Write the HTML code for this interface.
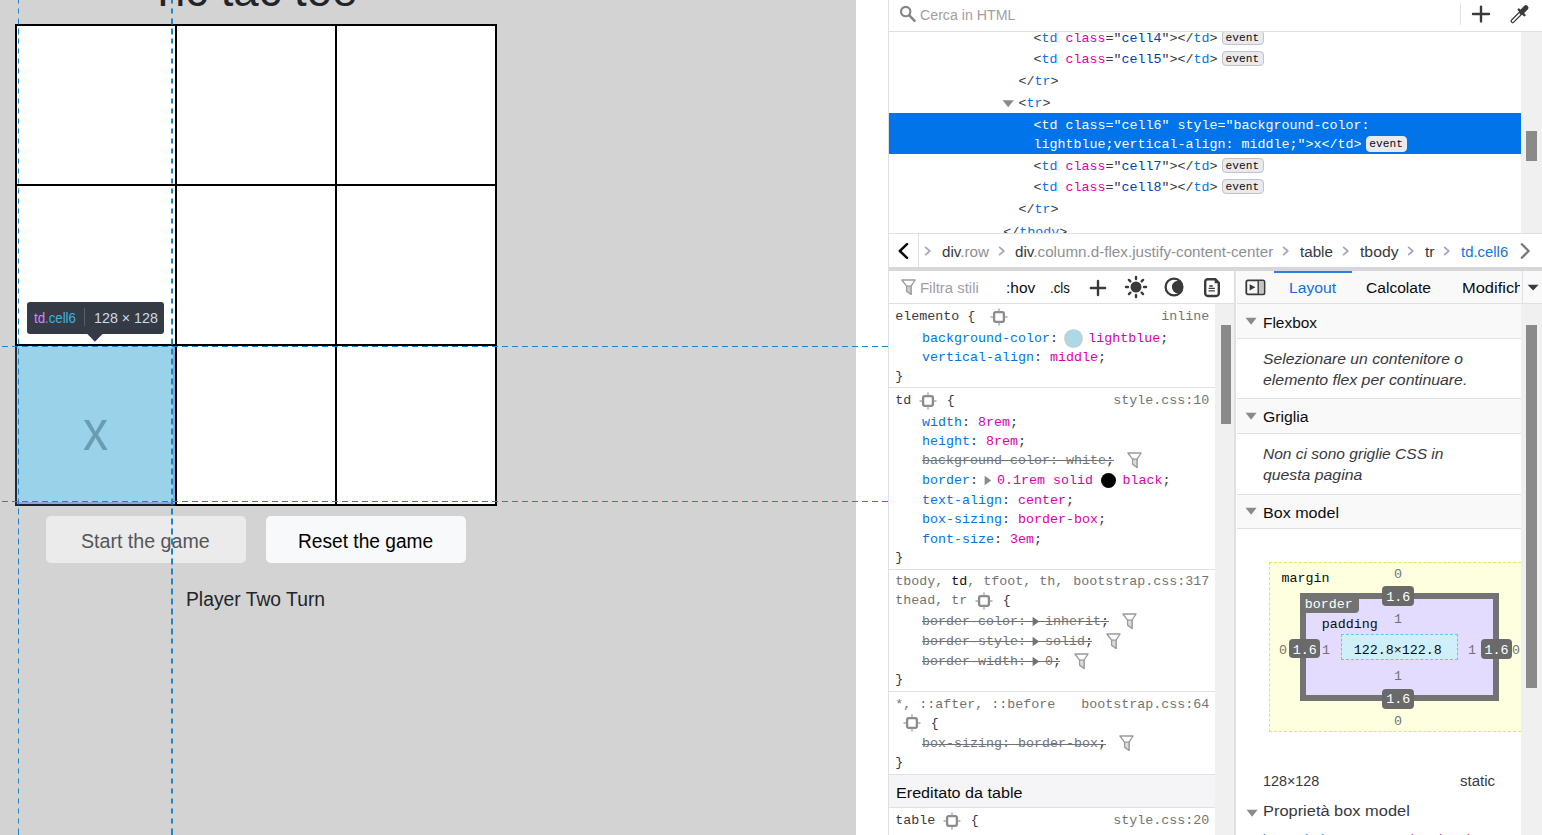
<!DOCTYPE html>
<html><head><meta charset="utf-8"><title>Tic tac toe</title><style>
html,body{margin:0;padding:0;background:#fff}
body{width:1542px;height:835px;position:relative;overflow:hidden;font-family:"Liberation Sans",sans-serif}
div,span,svg{position:absolute;display:block}
.s{white-space:pre;line-height:24px;transform-origin:0 0;font-family:"Liberation Sans",sans-serif}
.m{white-space:pre;line-height:20px;font-family:"Liberation Mono",monospace}
i{font-style:normal}
</style></head><body>
<div style="left:0px;top:0px;width:856px;height:835px;background:#d3d3d3;"></div>
<div style="left:0;top:0;width:856px;height:24px;overflow:hidden">
<span class="s" style="left:149.30px;top:-21.20px;font-size:45.7px;color:#212529;transform:scaleX(0.9970)">Tic tac toe</span>
</div>
<div style="left:15px;top:24px;width:482px;height:482px;background:#000;"></div>
<div style="left:17px;top:26px;width:158px;height:158px;background:#fff;"></div>
<div style="left:177px;top:26px;width:158px;height:158px;background:#fff;"></div>
<div style="left:337px;top:26px;width:158px;height:158px;background:#fff;"></div>
<div style="left:17px;top:186px;width:158px;height:158px;background:#fff;"></div>
<div style="left:177px;top:186px;width:158px;height:158px;background:#fff;"></div>
<div style="left:337px;top:186px;width:158px;height:158px;background:#fff;"></div>
<div style="left:17px;top:346px;width:158px;height:158px;background:#fff;"></div>
<div style="left:177px;top:346px;width:158px;height:158px;background:#fff;"></div>
<div style="left:337px;top:346px;width:158px;height:158px;background:#fff;"></div>
<div style="left:17px;top:346px;width:158px;height:158px;background:#99d2e9;"></div>
<div style="left:15px;top:346px;width:2px;height:160px;background:#1d2a36;"></div>
<div style="left:15px;top:504px;width:160px;height:2px;background:#1a2430;"></div>
<div style="left:173px;top:346px;width:2px;height:158px;background:#8fa6d9;"></div>
<div style="left:17px;top:502px;width:158px;height:2px;background:#8fa6d9;"></div>
<span class="s" style="left:82.90px;top:418.30px;font-size:57.5px;color:#6b9db2;transform:scaleX(0.8765)">x</span>
<div style="left:46px;top:516px;width:200px;height:47px;background:#ebebeb;border-radius:5px;"></div>
<div style="left:266px;top:516px;width:200px;height:47px;background:#f8f9fa;border-radius:5px;"></div>
<span class="s" style="left:81.10px;top:529.30px;font-size:19.4px;color:#555657;transform:scaleX(1.0114)">Start the game</span>
<span class="s" style="left:298.10px;top:529.30px;font-size:19.4px;color:#000;transform:scaleX(0.9871)">Reset the game</span>
<span class="s" style="left:186.20px;top:587.30px;font-size:19.4px;color:#212529;transform:scaleX(0.9949)">Player Two Turn</span>
<div style="left:18px;top:0;width:1px;height:835px;background:repeating-linear-gradient(to bottom,#1c86c9 0 5.5px,transparent 5.5px 10px);background-position:0 -1.5px"></div>
<div style="left:171px;top:0;width:2px;height:835px;background:repeating-linear-gradient(to bottom,#1c86c9 0 5.5px,transparent 5.5px 10px);background-position:0 -1.5px"></div>
<div style="left:0;top:346px;width:888px;height:1px;background:repeating-linear-gradient(to right,#1c86c9 0 6px,transparent 6px 10px);background-position:2px 0"></div>
<div style="left:0;top:501px;width:888px;height:1px;background:repeating-linear-gradient(to right,#1c86c9 0 6px,transparent 6px 10px);background-position:2px 0"></div>
<div style="left:27px;top:302px;width:137px;height:32px;background:#353b45;border-radius:3px;"></div>
<svg style="left:86px;top:333px;" width="18" height="10" viewBox="0 0 18 10"><path d="M0.4 0H17.5L8.9 8.7z" fill="#353b45"/></svg>
<span class="s" style="left:33.60px;top:306.30px;font-size:14.2px;transform:scaleX(0.9314)"><i style="color:#df80ff">td</i><i style="color:#42b1e4">.cell6</i></span>
<div style="left:84px;top:308px;width:1px;height:18px;background:#5a606b;"></div>
<span class="s" style="left:93.80px;top:306.30px;font-size:14.2px;color:#cdd9e4;transform:scaleX(1.0067)">128 × 128</span>
<div style="left:856px;top:0px;width:686px;height:835px;background:#fff;"></div>
<div style="left:856px;top:346px;width:32px;height:1px;background:repeating-linear-gradient(to right,#1c86c9 0 6px,transparent 6px 10px);background-position:-4px 0"></div>
<div style="left:856px;top:501px;width:32px;height:1px;background:repeating-linear-gradient(to right,#1c86c9 0 6px,transparent 6px 10px);background-position:-4px 0"></div>
<div style="left:888px;top:0px;width:1px;height:835px;background:#e0e0e2;"></div>
<div style="left:889px;top:0px;width:653px;height:31px;background:#fff;"></div>
<div style="left:889px;top:31px;width:653px;height:1px;background:#e0e0e2;"></div>
<svg style="left:899px;top:5px;" width="18" height="18" viewBox="0 0 18 18"><circle cx="6.7" cy="6.6" r="4.7" fill="none" stroke="#858588" stroke-width="2.1"/><path d="M10.3 10.3L15.6 15.8" stroke="#858588" stroke-width="2.5" stroke-linecap="round"/></svg>
<span class="s" style="left:920.40px;top:2.80px;font-size:15.5px;color:#a0a0a3;transform:scaleX(0.9154)">Cerca in HTML</span>
<div style="left:1460px;top:2.5px;width:1px;height:22.5px;background:#e0e0e2;"></div>
<svg style="left:1471px;top:4.4px;" width="20" height="20" viewBox="0 0 20 20"><path d="M10 2.6V17.4M2 10H18" stroke="#3a3a3d" stroke-width="2.4" stroke-linecap="round"/></svg>
<svg style="left:1509px;top:3px;" width="22" height="22" viewBox="0 0 22 22"><path d="M3.7 18.1L12 9.8" stroke="#3a3a3d" stroke-width="4.3" stroke-linecap="round"/><path d="M3.7 18.1L12.6 9.2" stroke="#fff" stroke-width="1.7" stroke-linecap="round"/><path d="M12.7 9.1L16.9 4.7" stroke="#3a3a3d" stroke-width="5" stroke-linecap="round"/><path d="M9.8 6.6L15.4 12.2" stroke="#3a3a3d" stroke-width="2.4" stroke-linecap="round"/></svg>
<div style="left:889px;top:32px;width:653px;height:201px;overflow:hidden">
<div style="left:-889px;top:-32px;width:1542px;height:835px">
<div style="left:889px;top:113px;width:632px;height:41px;background:#0074e8;"></div>
<div style="left:1521px;top:32px;width:21px;height:201px;background:#f0f0f0;"></div>
<div style="left:1526px;top:130.5px;width:11px;height:30px;background:#8a8a8a;"></div>
<span class="m" style="left:1033.50px;top:28.80px;font-size:13.33px;"><i style="color:#38383d">&lt;</i><i style="color:#0074e8">td</i> <i style="color:#dd00a9">class</i><i style="color:#38383d">="</i><i style="color:#003eaa">cell4</i><i style="color:#38383d">"&gt;&lt;/</i><i style="color:#0074e8">td</i><i style="color:#38383d">&gt;</i></span>
<div style="left:1222.2px;top:29.6px;width:41.6px;height:15.8px;background:#e9e9ee;border:1px solid #c2c2c7;border-radius:4px;box-sizing:border-box"></div>
<span class="m" style="left:1225.60px;top:27.80px;font-size:11.2px;"><i style="color:#0c0c0d">event</i></span>
<span class="m" style="left:1033.50px;top:49.80px;font-size:13.33px;"><i style="color:#38383d">&lt;</i><i style="color:#0074e8">td</i> <i style="color:#dd00a9">class</i><i style="color:#38383d">="</i><i style="color:#003eaa">cell5</i><i style="color:#38383d">"&gt;&lt;/</i><i style="color:#0074e8">td</i><i style="color:#38383d">&gt;</i></span>
<div style="left:1222.2px;top:50.6px;width:41.6px;height:15.8px;background:#e9e9ee;border:1px solid #c2c2c7;border-radius:4px;box-sizing:border-box"></div>
<span class="m" style="left:1225.60px;top:48.80px;font-size:11.2px;"><i style="color:#0c0c0d">event</i></span>
<span class="m" style="left:1018.40px;top:71.80px;font-size:13.33px;"><i style="color:#38383d">&lt;/</i><i style="color:#0074e8">tr</i><i style="color:#38383d">&gt;</i></span>
<svg style="left:1002px;top:98.6px;" width="13" height="10" viewBox="0 0 13 10"><path d="M0.6 1.2H11.8L6.2 8.2z" fill="#8a8a8a"/></svg>
<span class="m" style="left:1018.40px;top:93.80px;font-size:13.33px;"><i style="color:#38383d">&lt;</i><i style="color:#0074e8">tr</i><i style="color:#38383d">&gt;</i></span>
<span class="m" style="left:1033.50px;top:115.80px;font-size:13.33px;"><i style="color:#fff">&lt;td class="cell6" style="background-color:</i></span>
<span class="m" style="left:1033.50px;top:134.80px;font-size:13.33px;"><i style="color:#fff">lightblue;vertical-align: middle;"&gt;x&lt;/td&gt;</i></span>
<div style="left:1365.9px;top:135.79999999999998px;width:41.6px;height:15.8px;background:#e9e9ee;border:1px solid #e9e9ee;border-radius:4px;box-sizing:border-box"></div>
<span class="m" style="left:1369.30px;top:134.00px;font-size:11.2px;"><i style="color:#0c0c0d">event</i></span>
<span class="m" style="left:1033.50px;top:156.80px;font-size:13.33px;"><i style="color:#38383d">&lt;</i><i style="color:#0074e8">td</i> <i style="color:#dd00a9">class</i><i style="color:#38383d">="</i><i style="color:#003eaa">cell7</i><i style="color:#38383d">"&gt;&lt;/</i><i style="color:#0074e8">td</i><i style="color:#38383d">&gt;</i></span>
<div style="left:1222.2px;top:157.6px;width:41.6px;height:15.8px;background:#e9e9ee;border:1px solid #c2c2c7;border-radius:4px;box-sizing:border-box"></div>
<span class="m" style="left:1225.60px;top:155.80px;font-size:11.2px;"><i style="color:#0c0c0d">event</i></span>
<span class="m" style="left:1033.50px;top:177.80px;font-size:13.33px;"><i style="color:#38383d">&lt;</i><i style="color:#0074e8">td</i> <i style="color:#dd00a9">class</i><i style="color:#38383d">="</i><i style="color:#003eaa">cell8</i><i style="color:#38383d">"&gt;&lt;/</i><i style="color:#0074e8">td</i><i style="color:#38383d">&gt;</i></span>
<div style="left:1222.2px;top:178.6px;width:41.6px;height:15.8px;background:#e9e9ee;border:1px solid #c2c2c7;border-radius:4px;box-sizing:border-box"></div>
<span class="m" style="left:1225.60px;top:176.80px;font-size:11.2px;"><i style="color:#0c0c0d">event</i></span>
<span class="m" style="left:1018.40px;top:199.80px;font-size:13.33px;"><i style="color:#38383d">&lt;/</i><i style="color:#0074e8">tr</i><i style="color:#38383d">&gt;</i></span>
<span class="m" style="left:1003.30px;top:222.80px;font-size:13.33px;"><i style="color:#38383d">&lt;/</i><i style="color:#0074e8">tbody</i><i style="color:#38383d">&gt;</i></span>
</div></div>
<div style="left:889px;top:233px;width:653px;height:1px;background:#e0e0e2;"></div>
<div style="left:889px;top:234px;width:653px;height:33px;background:#fff;"></div>
<div style="left:918px;top:234px;width:1px;height:33px;background:#e0e0e2;"></div>
<svg style="left:896px;top:241px;" width="14" height="20" viewBox="0 0 14 20"><path d="M11 3.2L3.8 10L11 16.8" fill="none" stroke="#0c0c0d" stroke-width="2.5" stroke-linecap="round" stroke-linejoin="round"/></svg>
<svg style="left:1517.5px;top:241px;" width="14" height="20" viewBox="0 0 14 20"><path d="M3.8 3.2L10.6 10L3.8 16.8" fill="none" stroke="#77777a" stroke-width="2.3" stroke-linecap="round" stroke-linejoin="round"/></svg>
<svg style="left:923.8px;top:245.8px;" width="8" height="10" viewBox="0 0 8 10"><path d="M1.6 1.4L5.8 5L1.6 8.6" fill="none" stroke="#a4a4c0" stroke-width="1.7" stroke-linecap="round" stroke-linejoin="round"/></svg>
<span class="s" style="left:941.50px;top:239.80px;font-size:15.5px;transform:scaleX(0.9773)"><i style="color:#38383d">div</i><i style="color:#8f8f93">.row</i></span>
<svg style="left:998.2px;top:245.8px;" width="8" height="10" viewBox="0 0 8 10"><path d="M1.6 1.4L5.8 5L1.6 8.6" fill="none" stroke="#a4a4c0" stroke-width="1.7" stroke-linecap="round" stroke-linejoin="round"/></svg>
<span class="s" style="left:1015.40px;top:239.80px;font-size:15.5px;transform:scaleX(0.9806)"><i style="color:#38383d">div</i><i style="color:#8f8f93">.column.d-flex.justify-content-center</i></span>
<svg style="left:1282.3px;top:245.8px;" width="8" height="10" viewBox="0 0 8 10"><path d="M1.6 1.4L5.8 5L1.6 8.6" fill="none" stroke="#a4a4c0" stroke-width="1.7" stroke-linecap="round" stroke-linejoin="round"/></svg>
<span class="s" style="left:1300.40px;top:239.80px;font-size:15.5px;color:#38383d;transform:scaleX(0.9791)">table</span>
<svg style="left:1342.4px;top:245.8px;" width="8" height="10" viewBox="0 0 8 10"><path d="M1.6 1.4L5.8 5L1.6 8.6" fill="none" stroke="#a4a4c0" stroke-width="1.7" stroke-linecap="round" stroke-linejoin="round"/></svg>
<span class="s" style="left:1360.30px;top:239.80px;font-size:15.5px;color:#38383d;transform:scaleX(1.0155)">tbody</span>
<svg style="left:1407.2px;top:245.8px;" width="8" height="10" viewBox="0 0 8 10"><path d="M1.6 1.4L5.8 5L1.6 8.6" fill="none" stroke="#a4a4c0" stroke-width="1.7" stroke-linecap="round" stroke-linejoin="round"/></svg>
<span class="s" style="left:1425.20px;top:239.80px;font-size:15.5px;color:#38383d;transform:scaleX(1.0137)">tr</span>
<svg style="left:1443.4px;top:245.8px;" width="8" height="10" viewBox="0 0 8 10"><path d="M1.6 1.4L5.8 5L1.6 8.6" fill="none" stroke="#a4a4c0" stroke-width="1.7" stroke-linecap="round" stroke-linejoin="round"/></svg>
<span class="s" style="left:1461.40px;top:239.80px;font-size:15.5px;color:#1276dc;transform:scaleX(0.9612)">td.cell6</span>
<div style="left:889px;top:267px;width:653px;height:3.6px;background:#d7d7db;"></div>
<div style="left:889px;top:270.6px;width:345px;height:32.4px;background:#fff;"></div>
<div style="left:889px;top:303px;width:345px;height:1px;background:#e0e0e2;"></div>
<svg style="left:900.6px;top:279px;" width="15" height="17" viewBox="0 0 15 17"><path d="M0.9 1H14.1L10 7.2V15.4L5.6 12V7.2z" fill="#fff" stroke="#9a9a9e" stroke-width="1.3" stroke-linejoin="round"/><path d="M5.6 7.2H10V15.4L5.6 12z" fill="#cdcdd0" stroke="#9a9a9e" stroke-width="1.2" stroke-linejoin="round"/></svg>
<span class="s" style="left:920.40px;top:275.80px;font-size:15.5px;color:#a0a0a3;transform:scaleX(0.9619)">Filtra stili</span>
<span class="s" style="left:1006.40px;top:275.80px;font-size:15.5px;color:#0c0c0d;transform:scaleX(0.9968)">:hov</span>
<span class="s" style="left:1050.00px;top:275.80px;font-size:15.5px;color:#0c0c0d;transform:scaleX(0.8516)">.cls</span>
<svg style="left:1087.7px;top:277.6px;" width="20" height="20" viewBox="0 0 20 20"><path d="M10 2.9V17.1M2.9 10H17.1" stroke="#3a3a3d" stroke-width="2.4" stroke-linecap="round"/></svg>
<svg style="left:1124px;top:274.9px;" width="24" height="24" viewBox="0 0 24 24"><circle cx="12" cy="12" r="5.5" fill="#3a3a3d"/><g stroke="#3a3a3d" stroke-width="2.4" stroke-linecap="round"><path d="M20.00 12.00L22.00 12.00"/><path d="M17.66 17.66L19.07 19.07"/><path d="M12.00 20.00L12.00 22.00"/><path d="M6.34 17.66L4.93 19.07"/><path d="M4.00 12.00L2.00 12.00"/><path d="M6.34 6.34L4.93 4.93"/><path d="M12.00 4.00L12.00 2.00"/><path d="M17.66 6.34L19.07 4.93"/></g></svg>
<svg style="left:1163.1px;top:275.9px;" width="22" height="22" viewBox="0 0 22 22"><defs><clipPath id="mc"><circle cx="11" cy="11" r="9"/></clipPath></defs><circle cx="11" cy="11" r="8.4" fill="none" stroke="#3a3a3d" stroke-width="2.3"/><circle cx="15.2" cy="11" r="6.3" fill="#3a3a3d" clip-path="url(#mc)"/></svg>
<svg style="left:1203px;top:276.5px;" width="18" height="21" viewBox="0 0 18 21"><path d="M4.8 2.2H12.2L15.8 5.8V16.4a2.6 2.6 0 0 1-2.6 2.6H4.8a2.6 2.6 0 0 1-2.6-2.6V4.8a2.6 2.6 0 0 1 2.6-2.6z" fill="none" stroke="#3a3a3d" stroke-width="2.4" stroke-linejoin="round"/><path d="M11.6 2.4V6.2H15.6z" fill="#3a3a3d"/><path d="M6.2 9H9.8M5.6 11.4H11.9M5.6 13.8H11.9" stroke="#3a3a3d" stroke-width="1.3"/></svg>
<div style="left:889px;top:304px;width:345px;height:531px;overflow:hidden;background:#fff">
<div style="left:-889px;top:-304px;width:1542px;height:835px">
<div style="left:1215px;top:304px;width:19px;height:531px;background:#f0f0f0;"></div>
<div style="left:1220.7px;top:325.2px;width:10px;height:98.4px;background:#8a8a8a;"></div>
<span class="m" style="left:895.20px;top:306.80px;font-size:13.33px;"><i style="color:#38383d">elemento {</i></span>
<svg style="left:989.5px;top:307.8px;" width="18" height="18" viewBox="0 0 18 18"><rect x="4.1" y="4.1" width="9.8" height="9.8" rx="1.8" fill="none" stroke="#8b8b8e" stroke-width="2.3"/><path d="M9 0.5V3.4M9 14.6V17.5M0.5 9H3.4M14.6 9H17.5" stroke="#a6a6a9" stroke-width="1.4"/></svg>
<span class="m" style="left:1161.20px;top:306.80px;font-size:13.33px;"><i style="color:#737373">inline</i></span>
<span class="m" style="left:922.00px;top:328.80px;font-size:13.33px;"><i style="color:#0074e8">background-color</i><i style="color:#38383d">: </i></span>
<div style="left:1065px;top:330.2px;width:16.6px;height:16.6px;border-radius:50%;background:#add8e6;box-shadow:0 0 0 0.8px #c9c9cc"></div>
<span class="m" style="left:1088.20px;top:328.80px;font-size:13.33px;"><i style="color:#dd00a9">lightblue</i><i style="color:#38383d">;</i></span>
<span class="m" style="left:922.00px;top:347.80px;font-size:13.33px;"><i style="color:#0074e8">vertical-align</i><i style="color:#38383d">: </i><i style="color:#dd00a9">middle</i><i style="color:#38383d">;</i></span>
<span class="m" style="left:895.20px;top:366.80px;font-size:13.33px;"><i style="color:#38383d">}</i></span>
<div style="left:889px;top:387.4px;width:326px;height:1px;background:#e0e0e2;"></div>
<span class="m" style="left:895.20px;top:390.80px;font-size:13.33px;"><i style="color:#38383d">td</i></span>
<svg style="left:919.3px;top:391.8px;" width="18" height="18" viewBox="0 0 18 18"><rect x="4.1" y="4.1" width="9.8" height="9.8" rx="1.8" fill="none" stroke="#8b8b8e" stroke-width="2.3"/><path d="M9 0.5V3.4M9 14.6V17.5M0.5 9H3.4M14.6 9H17.5" stroke="#a6a6a9" stroke-width="1.4"/></svg>
<span class="m" style="left:946.70px;top:390.80px;font-size:13.33px;"><i style="color:#38383d">{</i></span>
<span class="m" style="left:1113.20px;top:390.80px;font-size:13.33px;"><i style="color:#737373">style.css:10</i></span>
<span class="m" style="left:922.00px;top:412.80px;font-size:13.33px;"><i style="color:#0074e8">width</i><i style="color:#38383d">: </i><i style="color:#dd00a9">8rem</i><i style="color:#38383d">;</i></span>
<span class="m" style="left:922.00px;top:432.30px;font-size:13.33px;"><i style="color:#0074e8">height</i><i style="color:#38383d">: </i><i style="color:#dd00a9">8rem</i><i style="color:#38383d">;</i></span>
<span class="m" style="left:922.00px;top:450.80px;font-size:13.33px;"><i style="color:#737373">background-color: white</i><i style="color:#38383d">;</i></span>
<div style="left:922.0px;top:460.20000000000005px;width:191.79999999999995px;height:1.3px;background:#737373;"></div>
<svg style="left:1127.1999999999998px;top:451.59999999999997px;" width="15" height="17" viewBox="0 0 15 17"><path d="M0.9 1H14.1L10 7.2V15.4L5.6 12V7.2z" fill="#fff" stroke="#9a9a9e" stroke-width="1.3" stroke-linejoin="round"/><path d="M5.6 7.2H10V15.4L5.6 12z" fill="#dcdcde" stroke="#9a9a9e" stroke-width="1.2" stroke-linejoin="round"/></svg>
<span class="m" style="left:922.00px;top:471.30px;font-size:13.33px;"><i style="color:#0074e8">border</i><i style="color:#38383d">: </i></span>
<svg style="left:984.4px;top:475.3px;" width="8" height="11" viewBox="0 0 8 11"><path d="M0.6 0.8L7.2 5.5L0.6 10.2z" fill="#8a8a8a"/></svg>
<span class="m" style="left:997.00px;top:471.30px;font-size:13.33px;"><i style="color:#dd00a9">0.1rem solid</i></span>
<div style="left:1100.9px;top:473px;width:15.2px;height:15.2px;border-radius:50%;background:#000"></div>
<span class="m" style="left:1122.60px;top:471.30px;font-size:13.33px;"><i style="color:#dd00a9">black</i><i style="color:#38383d">;</i></span>
<span class="m" style="left:922.00px;top:490.80px;font-size:13.33px;"><i style="color:#0074e8">text-align</i><i style="color:#38383d">: </i><i style="color:#dd00a9">center</i><i style="color:#38383d">;</i></span>
<span class="m" style="left:922.00px;top:510.20px;font-size:13.33px;"><i style="color:#0074e8">box-sizing</i><i style="color:#38383d">: </i><i style="color:#dd00a9">border-box</i><i style="color:#38383d">;</i></span>
<span class="m" style="left:922.00px;top:529.80px;font-size:13.33px;"><i style="color:#0074e8">font-size</i><i style="color:#38383d">: </i><i style="color:#dd00a9">3em</i><i style="color:#38383d">;</i></span>
<span class="m" style="left:895.20px;top:548.40px;font-size:13.33px;"><i style="color:#38383d">}</i></span>
<div style="left:889px;top:568.5px;width:326px;height:1px;background:#e0e0e2;"></div>
<span class="m" style="left:895.20px;top:572.20px;font-size:13.33px;"><i style="color:#737373">tbody, </i><i style="color:#0c0c0d">td</i><i style="color:#737373">, tfoot, th,</i></span>
<span class="m" style="left:1073.20px;top:572.20px;font-size:13.33px;"><i style="color:#737373">bootstrap.css:317</i></span>
<span class="m" style="left:895.20px;top:591.00px;font-size:13.33px;"><i style="color:#737373">thead, tr</i></span>
<svg style="left:975.2px;top:591.6px;" width="18" height="18" viewBox="0 0 18 18"><rect x="4.1" y="4.1" width="9.8" height="9.8" rx="1.8" fill="none" stroke="#8b8b8e" stroke-width="2.3"/><path d="M9 0.5V3.4M9 14.6V17.5M0.5 9H3.4M14.6 9H17.5" stroke="#a6a6a9" stroke-width="1.4"/></svg>
<span class="m" style="left:1002.70px;top:591.00px;font-size:13.33px;"><i style="color:#38383d">{</i></span>
<span class="m" style="left:922.00px;top:612.00px;font-size:13.33px;"><i style="color:#737373">border-color:</i></span>
<svg style="left:1031.8px;top:616.0px;" width="8" height="11" viewBox="0 0 8 11"><path d="M0.6 0.8L7.2 5.5L0.6 10.2z" fill="#737373"/></svg>
<span class="m" style="left:1045.00px;top:612.00px;font-size:13.33px;"><i style="color:#737373">inherit</i><i style="color:#38383d">;</i></span>
<div style="left:922.0px;top:621.2px;width:186.5999999999999px;height:1.3px;background:#737373;"></div>
<svg style="left:1122.1999999999998px;top:612.6000000000001px;" width="15" height="17" viewBox="0 0 15 17"><path d="M0.9 1H14.1L10 7.2V15.4L5.6 12V7.2z" fill="#fff" stroke="#9a9a9e" stroke-width="1.3" stroke-linejoin="round"/><path d="M5.6 7.2H10V15.4L5.6 12z" fill="#dcdcde" stroke="#9a9a9e" stroke-width="1.2" stroke-linejoin="round"/></svg>
<span class="m" style="left:922.00px;top:632.00px;font-size:13.33px;"><i style="color:#737373">border-style:</i></span>
<svg style="left:1031.8px;top:636.0px;" width="8" height="11" viewBox="0 0 8 11"><path d="M0.6 0.8L7.2 5.5L0.6 10.2z" fill="#737373"/></svg>
<span class="m" style="left:1045.00px;top:632.00px;font-size:13.33px;"><i style="color:#737373">solid</i><i style="color:#38383d">;</i></span>
<div style="left:922.0px;top:641.2px;width:170.4000000000001px;height:1.3px;background:#737373;"></div>
<svg style="left:1106.0px;top:632.6000000000001px;" width="15" height="17" viewBox="0 0 15 17"><path d="M0.9 1H14.1L10 7.2V15.4L5.6 12V7.2z" fill="#fff" stroke="#9a9a9e" stroke-width="1.3" stroke-linejoin="round"/><path d="M5.6 7.2H10V15.4L5.6 12z" fill="#dcdcde" stroke="#9a9a9e" stroke-width="1.2" stroke-linejoin="round"/></svg>
<span class="m" style="left:922.00px;top:651.90px;font-size:13.33px;"><i style="color:#737373">border-width:</i></span>
<svg style="left:1031.8px;top:655.9px;" width="8" height="11" viewBox="0 0 8 11"><path d="M0.6 0.8L7.2 5.5L0.6 10.2z" fill="#737373"/></svg>
<span class="m" style="left:1045.00px;top:651.90px;font-size:13.33px;"><i style="color:#737373">0</i><i style="color:#38383d">;</i></span>
<div style="left:922.0px;top:661.1px;width:138.0px;height:1.3px;background:#737373;"></div>
<svg style="left:1073.8px;top:652.5000000000001px;" width="15" height="17" viewBox="0 0 15 17"><path d="M0.9 1H14.1L10 7.2V15.4L5.6 12V7.2z" fill="#fff" stroke="#9a9a9e" stroke-width="1.3" stroke-linejoin="round"/><path d="M5.6 7.2H10V15.4L5.6 12z" fill="#dcdcde" stroke="#9a9a9e" stroke-width="1.2" stroke-linejoin="round"/></svg>
<span class="m" style="left:895.20px;top:670.10px;font-size:13.33px;"><i style="color:#38383d">}</i></span>
<div style="left:889px;top:691.2px;width:326px;height:1px;background:#e0e0e2;"></div>
<span class="m" style="left:895.20px;top:695.40px;font-size:13.33px;"><i style="color:#737373">*, ::after, ::before</i></span>
<span class="m" style="left:1081.20px;top:695.40px;font-size:13.33px;"><i style="color:#737373">bootstrap.css:64</i></span>
<svg style="left:903px;top:714.2px;" width="18" height="18" viewBox="0 0 18 18"><rect x="4.1" y="4.1" width="9.8" height="9.8" rx="1.8" fill="none" stroke="#8b8b8e" stroke-width="2.3"/><path d="M9 0.5V3.4M9 14.6V17.5M0.5 9H3.4M14.6 9H17.5" stroke="#a6a6a9" stroke-width="1.4"/></svg>
<span class="m" style="left:930.70px;top:713.60px;font-size:13.33px;"><i style="color:#38383d">{</i></span>
<span class="m" style="left:922.00px;top:734.30px;font-size:13.33px;"><i style="color:#737373">box-sizing: border-box</i><i style="color:#38383d">;</i></span>
<div style="left:922.0px;top:743.5px;width:184.0px;height:1.3px;background:#737373;"></div>
<svg style="left:1119.3999999999999px;top:734.9000000000001px;" width="15" height="17" viewBox="0 0 15 17"><path d="M0.9 1H14.1L10 7.2V15.4L5.6 12V7.2z" fill="#fff" stroke="#9a9a9e" stroke-width="1.3" stroke-linejoin="round"/><path d="M5.6 7.2H10V15.4L5.6 12z" fill="#dcdcde" stroke="#9a9a9e" stroke-width="1.2" stroke-linejoin="round"/></svg>
<span class="m" style="left:895.20px;top:753.40px;font-size:13.33px;"><i style="color:#38383d">}</i></span>
<div style="left:889px;top:774.4px;width:326px;height:1px;background:#e0e0e2;"></div>
<div style="left:889px;top:775.4px;width:326px;height:32px;background:#f5f5f8;"></div>
<div style="left:889px;top:807.2px;width:326px;height:1px;background:#e0e0e2;"></div>
<span class="s" style="left:895.80px;top:780.80px;font-size:15.5px;color:#0c0c0d;transform:scaleX(1.0411)">Ereditato da table</span>
<span class="m" style="left:895.20px;top:811.40px;font-size:13.33px;"><i style="color:#38383d">table</i></span>
<svg style="left:943px;top:812.4px;" width="18" height="18" viewBox="0 0 18 18"><rect x="4.1" y="4.1" width="9.8" height="9.8" rx="1.8" fill="none" stroke="#8b8b8e" stroke-width="2.3"/><path d="M9 0.5V3.4M9 14.6V17.5M0.5 9H3.4M14.6 9H17.5" stroke="#a6a6a9" stroke-width="1.4"/></svg>
<span class="m" style="left:970.70px;top:811.40px;font-size:13.33px;"><i style="color:#38383d">{</i></span>
<span class="m" style="left:1113.20px;top:811.40px;font-size:13.33px;"><i style="color:#737373">style.css:20</i></span>
</div></div>
<div style="left:1234px;top:270.6px;width:2px;height:565px;background:#e0e0e2;"></div>
<div style="left:1236px;top:270.6px;width:306px;height:564.4px;overflow:hidden;background:#fff">
<div style="left:-1236px;top:-270.6px;width:1542px;height:835px">
<div style="left:1236.5px;top:270.6px;width:305.5px;height:32.4px;background:#f9f9fa;"></div>
<div style="left:1236.5px;top:303px;width:305.5px;height:1px;background:#e0e0e2;"></div>
<div style="left:1274px;top:270.6px;width:78px;height:2.4px;background:#2a80dc;"></div>
<svg style="left:1244.6px;top:279.2px;" width="21" height="17" viewBox="0 0 21 17"><rect x="1.3" y="1.3" width="18.2" height="14" rx="1.6" fill="none" stroke="#38383d" stroke-width="1.8"/><rect x="13.4" y="2.2" width="5.2" height="12.2" fill="#c4c4c6"/><path d="M13.2 1.5V15" stroke="#38383d" stroke-width="1.4"/><path d="M4.6 5.2L10.4 8.3L4.6 11.4z" fill="#38383d"/></svg>
<span class="s" style="left:1289.40px;top:275.80px;font-size:15.5px;color:#1a6fd8;transform:scaleX(1.0144)">Layout</span>
<span class="s" style="left:1366.20px;top:275.80px;font-size:15.5px;color:#0c0c0d;transform:scaleX(1.0059)">Calcolate</span>
<div style="left:1450px;top:273px;width:70.4px;height:30px;overflow:hidden"><div style="left:-1450px;top:-273px;width:1542px;height:835px">
<span class="s" style="left:1462.00px;top:275.80px;font-size:15.5px;color:#0c0c0d;transform:scaleX(1.0612)">Modifiche</span>
</div></div>
<div style="left:1522px;top:270.6px;width:1px;height:32.4px;background:#e0e0e2;"></div>
<svg style="left:1526.6px;top:283.6px;" width="13" height="8" viewBox="0 0 13 8"><path d="M0.6 0.8H11.6L6.1 6.6z" fill="#38383d"/></svg>
<div style="left:1236.5px;top:303px;width:284.5px;height:34.60000000000002px;background:#f9f9fa;"></div>
<div style="left:1236.5px;top:303px;width:284.5px;height:1px;background:#e0e0e2;"></div>
<div style="left:1236.5px;top:337.6px;width:284.5px;height:1px;background:#e0e0e2;"></div>
<svg style="left:1244.6px;top:317.4px;" width="13" height="9" viewBox="0 0 13 9"><path d="M0.6 0.8H11.6L6.1 7.8z" fill="#8a8a8a"/></svg>
<span class="s" style="left:1263.30px;top:310.80px;font-size:15.5px;color:#0c0c0d;transform:scaleX(0.9951)">Flexbox</span>
<span class="s" style="left:1263.20px;top:347.40px;font-size:15.5px;color:#38383d;font-style:italic;transform:scaleX(1.0140)">Selezionare un contenitore o</span>
<span class="s" style="left:1263.20px;top:368.20px;font-size:15.5px;color:#38383d;font-style:italic;transform:scaleX(1.0220)">elemento flex per continuare.</span>
<div style="left:1236.5px;top:398.2px;width:284.5px;height:34.80000000000001px;background:#f9f9fa;"></div>
<div style="left:1236.5px;top:398.2px;width:284.5px;height:1px;background:#e0e0e2;"></div>
<div style="left:1236.5px;top:433px;width:284.5px;height:1px;background:#e0e0e2;"></div>
<svg style="left:1244.6px;top:412.0px;" width="13" height="9" viewBox="0 0 13 9"><path d="M0.6 0.8H11.6L6.1 7.8z" fill="#8a8a8a"/></svg>
<span class="s" style="left:1263.30px;top:405.40px;font-size:15.5px;color:#0c0c0d;transform:scaleX(1.0176)">Griglia</span>
<span class="s" style="left:1263.20px;top:442.40px;font-size:15.5px;color:#38383d;font-style:italic;transform:scaleX(1.0019)">Non ci sono griglie CSS in</span>
<span class="s" style="left:1263.20px;top:463.20px;font-size:15.5px;color:#38383d;font-style:italic;transform:scaleX(1.0186)">questa pagina</span>
<div style="left:1236.5px;top:494px;width:284.5px;height:34.200000000000045px;background:#f9f9fa;"></div>
<div style="left:1236.5px;top:494px;width:284.5px;height:1px;background:#e0e0e2;"></div>
<div style="left:1236.5px;top:528.2px;width:284.5px;height:1px;background:#e0e0e2;"></div>
<svg style="left:1244.6px;top:507.19999999999993px;" width="13" height="9" viewBox="0 0 13 9"><path d="M0.6 0.8H11.6L6.1 7.8z" fill="#8a8a8a"/></svg>
<span class="s" style="left:1263.30px;top:500.60px;font-size:15.5px;color:#0c0c0d;transform:scaleX(1.0377)">Box model</span>
<div style="left:1521px;top:304px;width:21px;height:531px;background:#f0f0f0;"></div>
<div style="left:1526px;top:325.2px;width:11px;height:363px;background:#8a8a8a;"></div>
<div style="left:1236.5px;top:529.2px;width:284.5px;height:305.8px;overflow:hidden"><div style="left:-1236.5px;top:-529.2px;width:1542px;height:835px">
<div style="left:1269px;top:562.2px;width:262px;height:169.6px;background:#fdffdf;border:1px dashed #dde85c;box-sizing:border-box"></div>
<div style="left:1300.2px;top:593.2px;width:198.6px;height:107.5px;background:#737373;"></div>
<div style="left:1305.9px;top:598.9px;width:187.2px;height:96.1px;background:#e3dcff;"></div>
<div style="left:1300.2px;top:593.2px;width:58.7px;height:19.5px;background:#737373;border-radius:0 0 4px 0"></div>
<div style="left:1341px;top:634.2px;width:117px;height:25.5px;background:#cff0fb;border:1px dashed #74b8ff;box-sizing:border-box"></div>
<span class="m" style="left:1281.60px;top:568.50px;font-size:13.33px;"><i style="color:#0c0c0d">margin</i></span>
<span class="m" style="left:1304.80px;top:594.50px;font-size:13.33px;"><i style="color:#fff">border</i></span>
<span class="m" style="left:1321.80px;top:615.20px;font-size:13.33px;"><i style="color:#0c0c0d">padding</i></span>
<span class="m" style="left:1394.00px;top:564.50px;font-size:13.33px;"><i style="color:#737373">0</i></span>
<div style="left:1382.2px;top:586.2px;width:32.0px;height:19.5px;background:#6a6a6a;border-radius:4px"></div>
<span class="m" style="left:1386.20px;top:587.60px;font-size:13.33px;"><i style="color:#fff">1.6</i></span>
<span class="m" style="left:1394.00px;top:610.30px;font-size:13.33px;"><i style="color:#737373">1</i></span>
<span class="m" style="left:1353.80px;top:640.50px;font-size:13.33px;"><i style="color:#0c0c0d">122.8×122.8</i></span>
<span class="m" style="left:1279.00px;top:640.50px;font-size:13.33px;"><i style="color:#737373">0</i></span>
<div style="left:1289.3px;top:639.3px;width:30.7px;height:19.2px;background:#6a6a6a;border-radius:4px"></div>
<span class="m" style="left:1292.65px;top:640.50px;font-size:13.33px;"><i style="color:#fff">1.6</i></span>
<span class="m" style="left:1322.00px;top:640.50px;font-size:13.33px;"><i style="color:#737373">1</i></span>
<span class="m" style="left:1468.00px;top:640.50px;font-size:13.33px;"><i style="color:#737373">1</i></span>
<div style="left:1481.2px;top:639.3px;width:30.6px;height:19.3px;background:#6a6a6a;border-radius:4px"></div>
<span class="m" style="left:1484.50px;top:640.50px;font-size:13.33px;"><i style="color:#fff">1.6</i></span>
<span class="m" style="left:1512.00px;top:640.50px;font-size:13.33px;"><i style="color:#737373">0</i></span>
<span class="m" style="left:1394.00px;top:666.60px;font-size:13.33px;"><i style="color:#737373">1</i></span>
<div style="left:1382.2px;top:689.3px;width:31.9px;height:19.3px;background:#6a6a6a;border-radius:4px"></div>
<span class="m" style="left:1386.15px;top:690.20px;font-size:13.33px;"><i style="color:#fff">1.6</i></span>
<span class="m" style="left:1394.00px;top:711.90px;font-size:13.33px;"><i style="color:#737373">0</i></span>
<span class="s" style="left:1262.60px;top:769.20px;font-size:15.5px;color:#38383d;transform:scaleX(0.9247)">128×128</span>
<span class="s" style="left:1459.90px;top:769.20px;font-size:15.5px;color:#38383d;transform:scaleX(0.9675)">static</span>
<svg style="left:1245.8px;top:809.4px;" width="13" height="9" viewBox="0 0 13 9"><path d="M0.6 0.8H11.6L6.1 7.8z" fill="#8a8a8a"/></svg>
<span class="s" style="left:1263.40px;top:799.40px;font-size:15.5px;color:#38383d;transform:scaleX(1.0583)">Proprietà box model</span>
<span class="m" style="left:1262.60px;top:829.80px;font-size:13.33px;"><i style="color:#0074e8">box-sizing</i></span>
<span class="m" style="left:1410.40px;top:829.80px;font-size:13.33px;"><i style="color:#dd00a9">border-box</i></span>
</div></div>
</div></div>
</body></html>
